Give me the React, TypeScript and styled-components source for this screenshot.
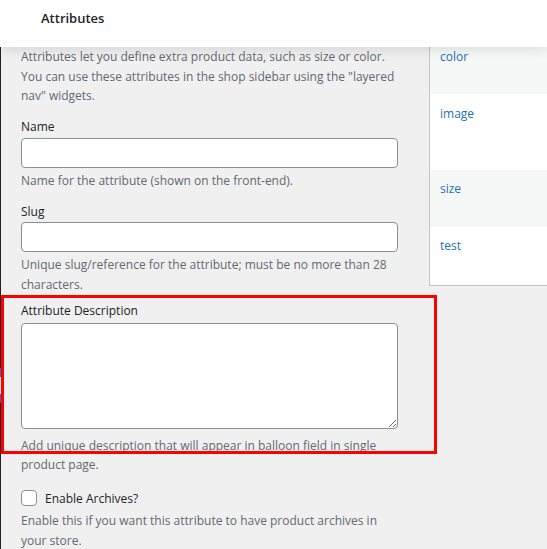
import React from "react";
import styled, { createGlobalStyle } from "styled-components";

const GlobalStyle = createGlobalStyle`
  html, body {
    margin: 0;
    padding: 0;
    background: #f0f0f1;
  }
  body {
    font-family: "Open Sans", "Noto Sans", sans-serif;
    font-size: 12px;
    line-height: 19.5px;
    color: #3c434a;
  }
  * { box-sizing: border-box; }
`;

const Page = styled.div`
  width: 547px;
  height: 549px;
  overflow: hidden;
  display: flex;
  flex-direction: column;
`;

const TitleBar = styled.header`
  position: relative;
  z-index: 2;
  flex: 0 0 47px;
  background: #fff;
  padding: 8px 0 0 41px;
  box-shadow: 0 2px 12px rgba(0, 0, 0, 0.13);
`;

const Title = styled.h2`
  margin: 0;
  font-size: 13px;
  font-weight: 600;
  line-height: 20px;
  color: #1d2327;
`;

const Body = styled.div`
  flex: 1;
  display: flex;
  min-height: 0;
`;

/* the edge of the admin menu that peeks in on the left */
const MenuEdge = styled.div`
  flex: 0 0 1px;
  background: linear-gradient(
    to bottom,
    #1d2327 0,
    #1d2327 321px,
    #2271b1 321px,
    #2271b1 330px,
    #f0f0f1 330px,
    #f0f0f1 347px,
    #2271b1 347px,
    #2271b1 356px,
    #1d2327 356px
  );
`;

const FormColumn = styled.div`
  flex: 0 0 397px;
  padding-left: 20px;
  display: flex;
  flex-direction: column;
`;

const Intro = styled.p`
  margin: 0;
  color: #646970;
`;

const Field = styled.div<{ $gap: number }>`
  position: relative;
  margin-top: ${(p) => p.$gap}px;
  display: flex;
  flex-direction: column;
`;

const Label = styled.label`
  display: block;
  margin-bottom: 1px;
  color: #1d2327;
`;

const TextInput = styled.input`
  width: 100%;
  height: 30px;
  margin: 0;
  padding: 0 8px;
  border: 1px solid #8c8f94;
  border-radius: 4px;
  background: #fff;
  font: inherit;
`;

const TextArea = styled.textarea`
  width: 100%;
  height: 106px;
  margin: 1px 0 0;
  padding: 2px 6px;
  border: 1px solid #8c8f94;
  border-radius: 4px;
  background: #fff;
  font: inherit;
  resize: both;
`;

const Help = styled.p<{ $gap: number }>`
  margin: ${(p) => p.$gap}px 0 0;
  color: #646970;
`;

/* red annotation frame drawn around the description field */
const Highlight = styled.div`
  position: absolute;
  left: -20px;
  top: -6px;
  width: 436px;
  height: 159px;
  border: 3px solid #ff0000;
  pointer-events: none;
`;

const CheckRow = styled.label`
  margin-top: 14px;
  display: flex;
  align-items: center;
  gap: 8px;
  color: #1d2327;
`;

const Box = styled.span`
  flex: 0 0 16px;
  height: 16px;
  border: 1px solid #8c8f94;
  border-radius: 4px;
  background: #fff;
`;

const AttrTable = styled.div`
  margin: -8px -20px 0 31px;
  flex: 1;
  align-self: flex-start;
  display: flex;
  flex-direction: column;
  border-left: 1px solid #c3c4c7;
  border-bottom: 1px solid #c3c4c7;
  background: #fff;
`;

const AttrRow = styled.div<{ $height: number; $pad: number; $alt: boolean }>`
  height: ${(p) => p.$height}px;
  padding: ${(p) => p.$pad}px 10px 0;
  background: ${(p) => (p.$alt ? "#f6f7f7" : "#fff")};
`;

const AttrLink = styled.a`
  color: #2271b1;
  text-decoration: none;
`;

const attributes = [
  { name: "color", height: 55, pad: 8 },
  { name: "image", height: 76, pad: 10 },
  { name: "size", height: 57, pad: 9 },
  { name: "test", height: 58, pad: 9 },
];

export default function App() {
  return (
    <>
      <GlobalStyle />
      <Page>
        <TitleBar>
          <Title>Attributes</Title>
        </TitleBar>
        <Body>
          <MenuEdge />
          <FormColumn>
            <Intro>
              Attributes let you define extra product data, such as size or color. You can use these
              attributes in the shop sidebar using the "layered nav" widgets.
            </Intro>

            <Field $gap={11.5}>
              <Label htmlFor="attribute_label">Name</Label>
              <TextInput id="attribute_label" type="text" />
              <Help $gap={3}>Name for the attribute (shown on the front-end).</Help>
            </Field>

            <Field $gap={11.5}>
              <Label htmlFor="attribute_name">Slug</Label>
              <TextInput id="attribute_name" type="text" />
              <Help $gap={3}>
                Unique slug/reference for the attribute; must be no more than 28 characters.
              </Help>
            </Field>

            <Field $gap={7}>
              <Label htmlFor="attribute_description">Attribute Description</Label>
              <TextArea id="attribute_description" />
              <Help $gap={7}>
                Add unique description that will appear in balloon field in single product page.
              </Help>
              <Highlight />
            </Field>

            <CheckRow>
              <Box />
              Enable Archives?
            </CheckRow>
            <Help $gap={3}>
              Enable this if you want this attribute to have product archives in your store.
            </Help>
          </FormColumn>

          <AttrTable>
            {attributes.map((a, i) => (
              <AttrRow key={a.name} $height={a.height} $pad={a.pad} $alt={i % 2 === 0}>
                <AttrLink href="#">{a.name}</AttrLink>
              </AttrRow>
            ))}
          </AttrTable>
        </Body>
      </Page>
    </>
  );
}
